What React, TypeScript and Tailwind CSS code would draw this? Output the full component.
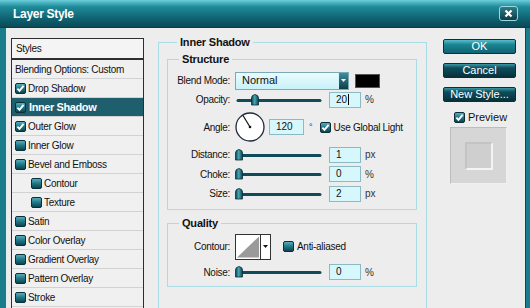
import React from "react";

const F = "font-['Liberation_Sans',Arial,sans-serif]";

function Box({ checked }: { checked: boolean }) {
  return (
    <svg width="11" height="11" viewBox="0 0 11 11" className="shrink-0">
      <defs>
        <linearGradient id="cbg" x1="0" y1="0" x2="0" y2="1">
          <stop offset="0" stopColor="#5fb3c1" />
          <stop offset="0.5" stopColor="#1f7685" />
          <stop offset="1" stopColor="#0b3f4b" />
        </linearGradient>
      </defs>
      <rect x="0.5" y="0.5" width="10" height="10" rx="1.5" fill="url(#cbg)" stroke="#0a2f38" />
      {checked && <path d="M2.4 5.6 L4.5 7.8 L8.6 2.9" stroke="#fff" strokeWidth="1.9" fill="none" />}
    </svg>
  );
}

function Slider({ pos }: { pos: number }) {
  return (
    <svg width="88" height="12" viewBox="0 0 88 12" className="shrink-0">
      <defs>
        <linearGradient id="thg" x1="0" y1="0" x2="1" y2="0">
          <stop offset="0" stopColor="#0b3f4b" />
          <stop offset="0.45" stopColor="#4aa7b5" />
          <stop offset="1" stopColor="#0b3f4b" />
        </linearGradient>
      </defs>
      <line x1="3" y1="6.5" x2="85" y2="6.5" stroke="#0f4b58" strokeWidth="3" strokeLinecap="round" />
      <path
        d={`M${pos - 3.5} 11 L${pos - 3.5} 4 Q${pos - 3.5} 1 ${pos} 0.5 Q${pos + 3.5} 1 ${pos + 3.5} 4 L${pos + 3.5} 11 Z`}
        fill="url(#thg)"
        stroke="#0a2f38"
        strokeWidth="0.8"
      />
    </svg>
  );
}

function Input({ value, cursor, w = "w-[32px]" }: { value: string; cursor?: boolean; w?: string }) {
  return (
    <div className={`${w} h-[16px] bg-[#d6f7fc] border border-[#8db9c2] flex items-center pl-[6px] text-[10px] text-[#111] leading-none`}>
      {value}
      {cursor && <span className="inline-block w-px h-[11px] bg-black ml-px" />}
    </div>
  );
}

function Row({ label, h, children }: { label: string; h: string; children: React.ReactNode }) {
  return (
    <div className={`flex items-center ${h}`}>
      <div className="w-[63px] text-right text-[10px] tracking-[-0.3px] text-[#111] pr-px">{label}</div>
      <div className="ml-[4px] flex items-center">{children}</div>
    </div>
  );
}

function SliderRow({ label, pos, value, unit, cursor, h = "h-[19px]" }: { label: string; pos: number; value: string; unit: string; cursor?: boolean; h?: string }) {
  return (
    <Row label={label} h={h}>
      <Slider pos={pos} />
      <div className="ml-[6px]">
        <Input value={value} cursor={cursor} />
      </div>
      <span className="ml-[4px] text-[10px] text-[#333]">{unit}</span>
    </Row>
  );
}

function Btn({ label, ok }: { label: string; ok?: boolean }) {
  return (
    <div
      className={`w-[73px] h-[15px] rounded-[2px] border border-[#06303a] flex items-center justify-center text-white text-[11px] leading-none ${
        ok
          ? "bg-[linear-gradient(#55c0cc,#1b8593_35%,#0f6472)]"
          : "bg-[linear-gradient(#3a98a6,#0f4d5b_30%,#06313b)]"
      }`}
    >
      {label}
    </div>
  );
}

const items: { name: string; checked: boolean; indent?: boolean; active?: boolean }[] = [
  { name: "Drop Shadow", checked: true },
  { name: "Inner Shadow", checked: true, active: true },
  { name: "Outer Glow", checked: true },
  { name: "Inner Glow", checked: false },
  { name: "Bevel and Emboss", checked: false },
  { name: "Contour", checked: false, indent: true },
  { name: "Texture", checked: false, indent: true },
  { name: "Satin", checked: false },
  { name: "Color Overlay", checked: false },
  { name: "Gradient Overlay", checked: false },
  { name: "Pattern Overlay", checked: false },
  { name: "Stroke", checked: false },
];

export default function App() {
  return (
    <div className={`w-[530px] h-[308px] overflow-hidden flex flex-col ${F} bg-[#1a7d8c]`}>
      {/* Title bar */}
      <div className="h-[28px] shrink-0 flex items-center justify-between pl-[13px] pr-[12px] bg-[linear-gradient(#6ccfdb,#1f8b9a_25%,#0f6170_70%,#0a4a56)] border-b border-[#083c46]">
        <span className="text-white font-bold text-[12px] tracking-[-0.3px]">Layer Style</span>
        <div className="w-[19px] h-[15px] rounded-[3px] border border-[#9fd7df] bg-[linear-gradient(#2c7b88,#0b3e49)] flex items-center justify-center">
          <svg width="9" height="9" viewBox="0 0 9 9">
            <path d="M1.5 1.5 L7.5 7.5 M7.5 1.5 L1.5 7.5" stroke="#fff" strokeWidth="2.2" />
          </svg>
        </div>
      </div>

      {/* Body */}
      <div className="flex-1 flex min-h-0 pl-[6px] pr-[4px]">
        <div className="flex-1 flex bg-[#ededed] pl-[5px] pt-[10px] border-r border-[#0a4a56]">
          {/* Styles list */}
          <div className="w-[133px] shrink-0 flex flex-col border border-[#2e2e2e] border-b-0 bg-[#f0f0f0] text-[10px] tracking-[-0.3px]">
            <div className="h-[21px] flex items-center pl-[4px] border-b-2 border-[#2e2e2e] text-[#111] bg-[#f4f4f4]">Styles</div>
            <div className="h-[19px] flex items-center pl-[3px] border-b border-[#d2d2d2] text-[#111]">Blending Options: Custom</div>
            {items.map((it) => (
              <div
                key={it.name}
                className={`h-[19px] shrink-0 flex items-center gap-[2px] border-b border-[#d2d2d2] ${it.indent ? "pl-[19px]" : "pl-[3px]"} ${
                  it.active ? "bg-[#1f5e6d] text-white font-bold text-[11px] tracking-[-0.4px]" : "text-[#111]"
                }`}
              >
                <Box checked={it.checked} />
                <span className={it.active ? "ml-[1px]" : ""}>{it.name}</span>
              </div>
            ))}
          </div>

          {/* Main fieldset */}
          <fieldset className="ml-[14px] w-[269px] shrink-0 border border-[#a9dce5] border-b-0 pl-[8px] pr-[9px] -mt-[2px]">
            <legend className="ml-[10px] px-[3px] text-[11px] font-bold text-[#111] leading-[13px] tracking-[-0.2px]">Inner Shadow</legend>
            <fieldset className="border border-[#a9dce5] mt-[4px] pb-[6px]">
              <legend className="ml-[11px] px-[3px] text-[11px] font-bold text-[#111] leading-[13px] tracking-[-0.2px]">Structure</legend>
              <div className="mt-[5px]">
                <Row label="Blend Mode:" h="h-[19px]">
                  <div className="w-[114px] h-[18px] border border-[#7aaab5] bg-[linear-gradient(#e9fcff,#c8f1f8)] flex items-center justify-between pl-[6px]">
                    <span className="text-[11px] text-[#111]">Normal</span>
                    <div className="w-[10px] h-[16px] bg-[linear-gradient(#3d8f9c,#0c3e49)] border-l border-[#d6f5fa] flex items-center justify-center">
                      <svg width="5" height="3" viewBox="0 0 5 3"><path d="M0 0 L5 0 L2.5 3 Z" fill="#fff" /></svg>
                    </div>
                  </div>
                  <div className="ml-[6px] w-[25px] h-[14px] bg-black border border-[#555]" />
                </Row>
                <SliderRow label="Opacity:" pos={20} value="20" unit="%" cursor />
                <Row label="Angle:" h="h-[36px]">
                  <svg width="30" height="30" viewBox="0 0 30 30" className="shrink-0">
                    <circle cx="15" cy="15" r="14" fill="#fff" stroke="#1f2a3c" strokeWidth="1.3" />
                    <line x1="15" y1="15" x2="8" y2="3.5" stroke="#111" strokeWidth="1.2" />
                    <circle cx="15" cy="15" r="1.3" fill="#111" />
                  </svg>
                  <div className="ml-[4px]">
                    <Input value="120" w="w-[35px]" />
                  </div>
                  <span className="ml-[5px] text-[9px] text-[#333] self-start mt-[9px]">°</span>
                  <div className="ml-[7px] flex items-center gap-[3px]">
                    <Box checked />
                    <span className="text-[10px] tracking-[-0.3px] text-[#111]">Use Global Light</span>
                  </div>
                </Row>
                <SliderRow label="Distance:" pos={4} value="1" unit="px" />
                <SliderRow label="Choke:" pos={4} value="0" unit="%" h="h-[20px]" />
                <SliderRow label="Size:" pos={4} value="2" unit="px" />
              </div>
            </fieldset>

            <fieldset className="border border-[#a9dce5] mt-[7px] pb-[2px]">
              <legend className="ml-[11px] px-[3px] text-[11px] font-bold text-[#111] leading-[13px] tracking-[-0.2px]">Quality</legend>
              <div className="mt-[3px]">
                <Row label="Contour:" h="h-[27px]">
                  <div className="w-[36px] h-[26px] border border-[#333] bg-white flex">
                    <svg width="25" height="24" viewBox="0 0 25 24" className="border-r border-[#333]">
                      <path d="M1 23 L24 1 L24 23 Z" fill="#9a9a9a" />
                    </svg>
                    <div className="flex-1 flex items-center justify-center">
                      <svg width="5" height="3" viewBox="0 0 5 3"><path d="M0 0 L5 0 L2.5 3 Z" fill="#111" /></svg>
                    </div>
                  </div>
                  <div className="ml-[12px] flex items-center gap-[3px]">
                    <Box checked={false} />
                    <span className="text-[10px] tracking-[-0.3px] text-[#111]">Anti-aliased</span>
                  </div>
                </Row>
                <SliderRow label="Noise:" pos={4} value="0" unit="%" h="h-[24px]" />
              </div>
            </fieldset>
          </fieldset>

          {/* Right column */}
          <div className="ml-[16px] flex flex-col pt-[1px]">
            <Btn label="OK" ok />
            <div className="mt-[9px]"><Btn label="Cancel" /></div>
            <div className="mt-[9px]"><Btn label="New Style..." /></div>
            <div className="mt-[10px] ml-[11px] flex items-center gap-[3px] h-[11px]">
              <Box checked />
              <span className="text-[11px] text-[#111]">Preview</span>
            </div>
            <div className="mt-[4px] ml-[7px] w-[57px] h-[57px] bg-[#d6d6d6] border border-t-[#bdbdbd] border-l-[#bdbdbd] border-r-[#f0f0f0] border-b-[#f0f0f0] flex items-center justify-center">
              <div className="w-[28px] h-[28px] bg-[#cfcfcf] border-2 border-t-[#c4c4c4] border-l-[#c4c4c4] border-r-[#f4f4f4] border-b-[#f4f4f4]" />
            </div>
          </div>
        </div>
      </div>
    </div>
  );
}
